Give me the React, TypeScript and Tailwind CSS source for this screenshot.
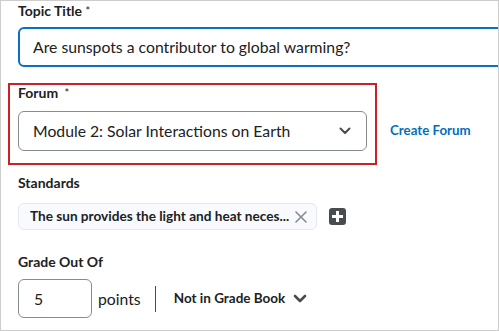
import React from "react";

export default function App() {
  return (
    <div className="w-[499px] h-[331px] overflow-hidden bg-white border border-[#cdcdcd] font-['Lato','Liberation_Sans',sans-serif] text-[#202122]">
      <div className="pt-[2px] pl-[17px]">
        <div className="text-[14px] leading-[16px] font-bold">
          Topic Title <span className="font-normal text-[11px] align-top">*</span>
        </div>
        <div className="mt-[8px] h-[40px] w-[520px] rounded-[6px] border-2 border-[#0a70c4] flex items-center pl-[13px] text-[15.75px]">
          Are sunspots a contributor to global warming?
        </div>
      </div>

      <div className="mt-[16px] ml-[7px] flex items-end">
        <div className="w-[369px] h-[82px] border-2 border-[#cd2026] pl-[8px] pr-[8px]">
          <div className="text-[14px] leading-[16px] font-bold">
            Forum <span className="font-normal text-[11px] align-top ml-[3px]">*</span>
          </div>
          <div className="mt-[10px] h-[40px] w-[349px] rounded-[6px] border border-[#868c8f] flex items-center justify-between pl-[14px] pr-[15px] text-[15.75px]">
            <span>Module 2: Solar Interactions on Earth</span>
            <svg width="12" height="8" viewBox="0 0 12 8" fill="none">
              <path d="M1.5 1.5 L6 6 L10.5 1.5" stroke="#494c4e" strokeWidth="2" strokeLinecap="round" strokeLinejoin="round" />
            </svg>
          </div>
        </div>
        <div className="ml-[13px] mb-[27px] text-[13.3px] font-bold text-[#006fbf] leading-[16px]">Create Forum</div>
      </div>

      <div className="pl-[17px]">
        <div className="mt-[10px] text-[14px] leading-[16px] font-bold">Standards</div>
        <div className="mt-[12px] flex items-center">
          <div className="h-[27px] w-[299px] rounded-[6px] border border-[#e3e9f1] bg-[#f8fafe] flex items-center justify-between pl-[11px] pr-[9px]">
            <span className="text-[13.6px] font-bold">The sun provides the light and heat neces...</span>
            <svg width="12" height="12" viewBox="0 0 12 12" fill="none">
              <path d="M1 1 L11 11 M11 1 L1 11" stroke="#868c8f" strokeWidth="1.6" strokeLinecap="round" />
            </svg>
          </div>
          <div className="ml-[12px] w-[17px] h-[17px] rounded-[3px] bg-[#494c4e] flex items-center justify-center">
            <svg width="11" height="11" viewBox="0 0 11 11">
              <path d="M4 0 H7 V4 H11 V7 H7 V11 H4 V7 H0 V4 H4 Z" fill="white" />
            </svg>
          </div>
        </div>

        <div className="mt-[24px] text-[14px] leading-[16px] font-bold">Grade Out Of</div>
        <div className="mt-[9px] flex items-center">
          <div className="w-[74px] h-[39px] rounded-[6px] border border-[#868c8f] flex items-center pl-[15px] text-[15.75px]">5</div>
          <span className="ml-[6px] text-[15.75px]">points</span>
          <div className="ml-[14px] w-px h-[26px] bg-[#494c4e]" />
          <span className="ml-[18px] text-[13.5px] font-bold">Not in Grade Book</span>
          <svg className="ml-[8px]" width="14" height="9" viewBox="0 0 14 9" fill="none">
            <path d="M2 2 L7 7 L12 2" stroke="#494c4e" strokeWidth="2.6" strokeLinecap="round" strokeLinejoin="round" />
          </svg>
        </div>
      </div>
    </div>
  );
}
